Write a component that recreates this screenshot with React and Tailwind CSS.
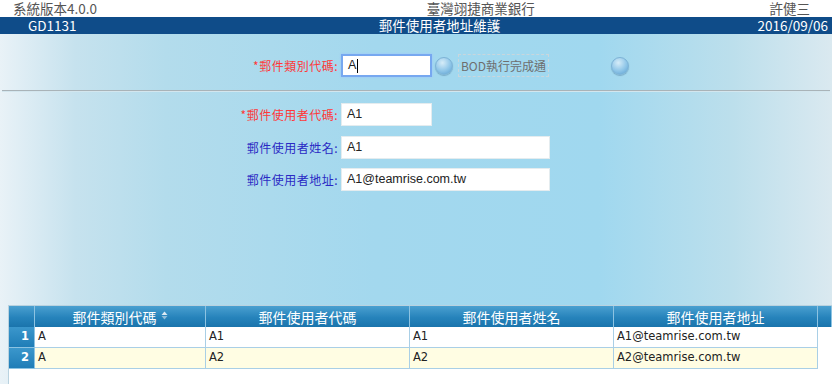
import React from 'react'

const cjk = { fontFamily: '"Noto Sans CJK TC", "Liberation Sans", sans-serif' }
const verdana = { fontFamily: '"DejaVu Sans", "Noto Sans CJK TC", sans-serif' }
const arial = { fontFamily: '"Liberation Sans", "Noto Sans CJK TC", sans-serif' }

const rows = [
  { no: 1, type: 'A', code: 'A1', name: 'A1', mail: 'A1@teamrise.com.tw' },
  { no: 2, type: 'A', code: 'A2', name: 'A2', mail: 'A2@teamrise.com.tw' },
]

function Bulb() {
  return (
    <span className="block w-[18px] h-[18px] rounded-full border border-[#7db3d6] bg-[radial-gradient(circle_at_40%_30%,#d6ecf8_0%,#8fc6e8_55%,#5b9fd0_100%)] shadow-[0_1px_1px_rgba(40,90,130,0.35)]" />
  )
}

function FieldRow({ label, required, value, wide, focused }) {
  return (
    <div className="flex items-center h-[23px]">
      <div
        className={`w-[338px] text-right text-[12px] tracking-[0.5px] ${required ? 'text-[#ff3838]' : 'text-[#2a2ac4]'}`}
        style={cjk}
      >
        {required && '*'}{label}:
      </div>
      <div
        className={`ml-[3px] h-[23px] bg-white flex items-center px-[5px] text-[12.5px] text-[#222] ${wide ? 'w-[209px]' : 'w-[91px]'} ${focused ? 'border-2 border-[#77a8f0] shadow-[0_0_2px_#9cc4ff]' : 'border border-[#e4ecef]'}`}
        style={arial}
      >
        {value}
        {focused && <span className="w-px h-[14px] bg-black ml-px" />}
      </div>
    </div>
  )
}

function SortIcon() {
  return (
    <svg width="7" height="9" viewBox="0 0 7 9" className="inline-block ml-[4px] mb-[2px]">
      <path d="M3.5 0.5 L6.5 4 L0.5 4 Z" fill="#dceaf4" />
      <path d="M3.5 8.5 L6.5 5 L0.5 5 Z" fill="#8fbcd8" />
    </svg>
  )
}

export default function App() {
  const headCls =
    'h-[21px] flex items-center justify-center text-white text-[14px] leading-none border-r border-[#8cc3e2] bg-[linear-gradient(to_bottom,#4aa0d0_0%,#2683bb_55%,#1a74ac_100%)]'
  return (
    <div className="w-[832px] h-[384px] overflow-hidden bg-white flex flex-col" style={cjk}>
      {/* title bar */}
      <div className="h-[17px] flex items-center justify-between pl-[13px] pr-[22px] text-[13.5px] text-[#555] leading-none">
        <span>系統版本4.0.0</span>
        <span className="ml-[95px]">臺灣翊捷商業銀行</span>
        <span>許健三</span>
      </div>
      <div className="h-[17px] bg-[#0f4c89] flex items-center justify-between pl-[28px] pr-[4px] text-[13.5px] text-white leading-none">
        <span>GD1131</span>
        <span className="ml-[45px]">郵件使用者地址維護</span>
        <span>2016/09/06</span>
      </div>

      {/* body */}
      <div className="flex-1 flex flex-col pt-[20px] bg-[linear-gradient(to_right,#e9f2f7_0%,#c6e2ee_9%,#b3dcec_20%,#a3d8ee_45%,#a0d8ef_72%,#bcdfec_88%,#dae9f0_100%)]">
        <div className="flex items-center">
          <FieldRow label="郵件類別代碼" required value="A" focused />
          <span className="ml-[3px]"><Bulb /></span>
          <div
            className="ml-[5px] w-[91px] h-[23px] border border-dashed border-[#c9d6dc] flex items-center justify-center text-[12px] text-[#6e6e6e]"
            style={cjk}
          >
            BOD執行完成通
          </div>
          <span className="ml-[62px]"><Bulb /></span>
        </div>

        <div className="mt-[13px] mx-[2px] h-[2px] bg-[#a9b3b8] border-b border-[#d3e6ee]" />

        <div className="mt-[11px] flex flex-col gap-[10px]">
          <FieldRow label="郵件使用者代碼" required value="A1" />
          <FieldRow label="郵件使用者姓名" value="A1" wide />
          <div className="-mt-px">
            <FieldRow label="郵件使用者地址" value="A1@teamrise.com.tw" wide />
          </div>
        </div>

        {/* grid */}
        <div className="mt-[114px] ml-[8px] flex-1 bg-white border-l border-t border-[#b9d2df]">
          <div className="grid grid-cols-[26px_171px_204px_204px_204px_1fr]">
            <div className={headCls} />
            <div className={headCls}>郵件類別代碼<SortIcon /></div>
            <div className={headCls}>郵件使用者代碼</div>
            <div className={headCls}>郵件使用者姓名</div>
            <div className={headCls}>郵件使用者地址</div>
            <div className={headCls} />
          </div>
          {rows.map((r) => {
            const bg = r.no % 2 === 0 ? 'bg-[#fffde3]' : 'bg-white'
            const cell = `h-[21px] flex items-center pl-[3px] text-[11.5px] text-[#222] border-r border-b border-[#a9cfe6] ${bg}`
            return (
              <div key={r.no} className="grid grid-cols-[26px_171px_204px_204px_204px_1fr]" style={verdana}>
                <div className="h-[21px] flex items-center justify-end pr-[5px] text-[11.5px] font-bold text-white border-r border-b border-[#8cc3e2] bg-[linear-gradient(to_bottom,#3b97cc_0%,#1f7db7_100%)]">
                  {r.no}
                </div>
                <div className={cell}>{r.type}</div>
                <div className={cell}>{r.code}</div>
                <div className={cell}>{r.name}</div>
                <div className={cell}>{r.mail}</div>
                <div />
              </div>
            )
          })}
        </div>
      </div>
    </div>
  )
}
